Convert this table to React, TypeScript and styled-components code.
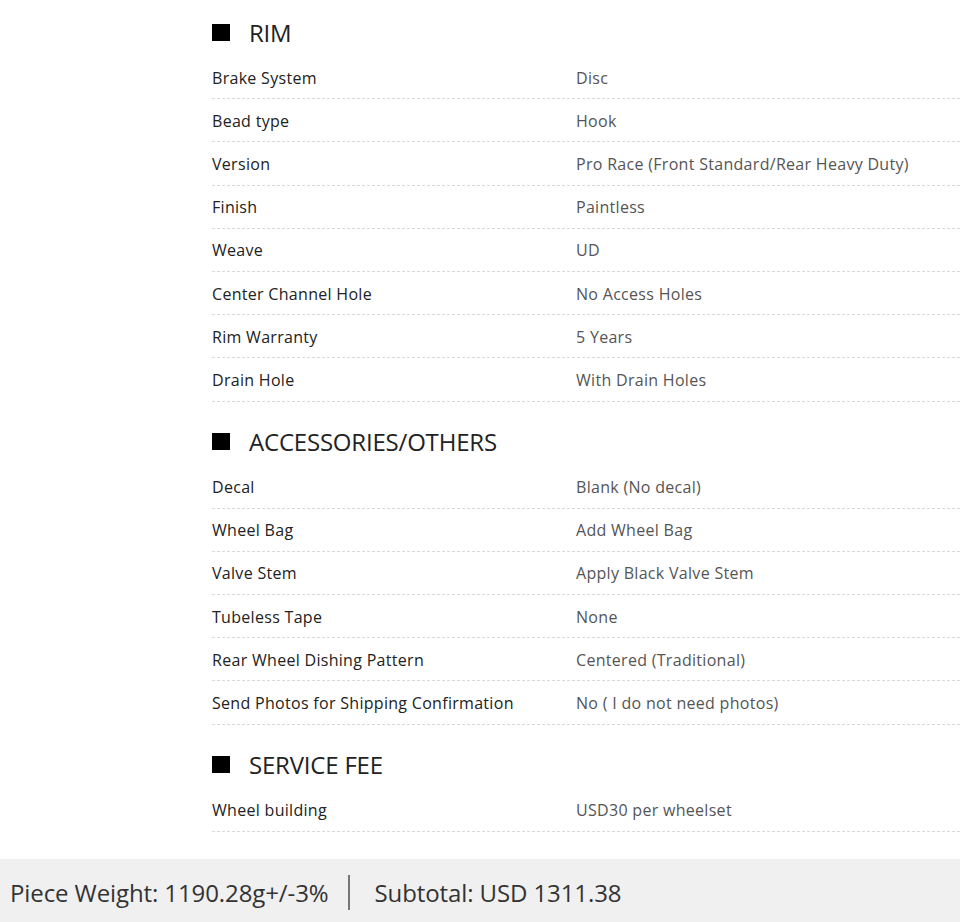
import styled, { createGlobalStyle } from "styled-components";

const GlobalStyle = createGlobalStyle`
  html, body {
    margin: 0;
    padding: 0;
    background: #fff;
    overflow: hidden;
  }
  body {
    font-family: "Open Sans", "Liberation Sans", sans-serif;
  }
`;

const Page = styled.div`
  width: 960px;
  height: 922px;
  display: flex;
  flex-direction: column;
  overflow: hidden;
`;

const Specs = styled.div`
  flex: 1;
  padding-left: 212px;
  padding-top: 16px;
`;

const Section = styled.section`
  & + & {
    margin-top: 24px;
  }
`;

const Heading = styled.h2`
  display: flex;
  align-items: center;
  gap: 19px;
  margin: 0 0 8px;
  height: 32px;
  font-size: 24px;
  font-weight: 400;
  color: #222;
  letter-spacing: -0.2px;
`;

const Square = styled.span`
  width: 18px;
  height: 17px;
  background: #000;
  flex-shrink: 0;
`;

const Row = styled.div`
  display: grid;
  grid-template-columns: 364px 1fr;
  align-items: center;
  height: 43.2px;
  border-bottom: 1px dashed #d9d9d9;
  font-size: 16px;
  letter-spacing: 0.3px;
  box-sizing: border-box;
  padding-top: 1px;
`;

const Label = styled.span`
  color: #222;
`;

const Value = styled.span`
  color: #555;
  white-space: nowrap;
`;

const Footer = styled.div`
  height: 63px;
  background: #f0f0f0;
  display: flex;
  align-items: center;
  padding-left: 10px;
  padding-top: 3px;
  box-sizing: border-box;
  font-size: 24px;
  color: #333;
  letter-spacing: -0.1px;
`;

const Divider = styled.span`
  width: 2px;
  height: 35px;
  background: #777;
  margin: 0 25px 0 19px;
`;

type Spec = [string, string];

const sections: { title: string; rows: Spec[] }[] = [
  {
    title: "RIM",
    rows: [
      ["Brake System", "Disc"],
      ["Bead type", "Hook"],
      ["Version", "Pro Race (Front Standard/Rear Heavy Duty)"],
      ["Finish", "Paintless"],
      ["Weave", "UD"],
      ["Center Channel Hole", "No Access Holes"],
      ["Rim Warranty", "5 Years"],
      ["Drain Hole", "With Drain Holes"],
    ],
  },
  {
    title: "ACCESSORIES/OTHERS",
    rows: [
      ["Decal", "Blank (No decal)"],
      ["Wheel Bag", "Add Wheel Bag"],
      ["Valve Stem", "Apply Black Valve Stem"],
      ["Tubeless Tape", "None"],
      ["Rear Wheel Dishing Pattern", "Centered (Traditional)"],
      ["Send Photos for Shipping Confirmation", "No ( I do not need photos)"],
    ],
  },
  {
    title: "SERVICE FEE",
    rows: [["Wheel building", "USD30 per wheelset"]],
  },
];

export default function App() {
  return (
    <Page>
      <GlobalStyle />
      <Specs>
        {sections.map((s) => (
          <Section key={s.title}>
            <Heading>
              <Square />
              {s.title}
            </Heading>
            {s.rows.map(([label, value]) => (
              <Row key={label}>
                <Label>{label}</Label>
                <Value>{value}</Value>
              </Row>
            ))}
          </Section>
        ))}
      </Specs>
      <Footer>
        <span>Piece Weight: 1190.28g+/-3%</span>
        <Divider />
        <span>Subtotal: USD 1311.38</span>
      </Footer>
    </Page>
  );
}
